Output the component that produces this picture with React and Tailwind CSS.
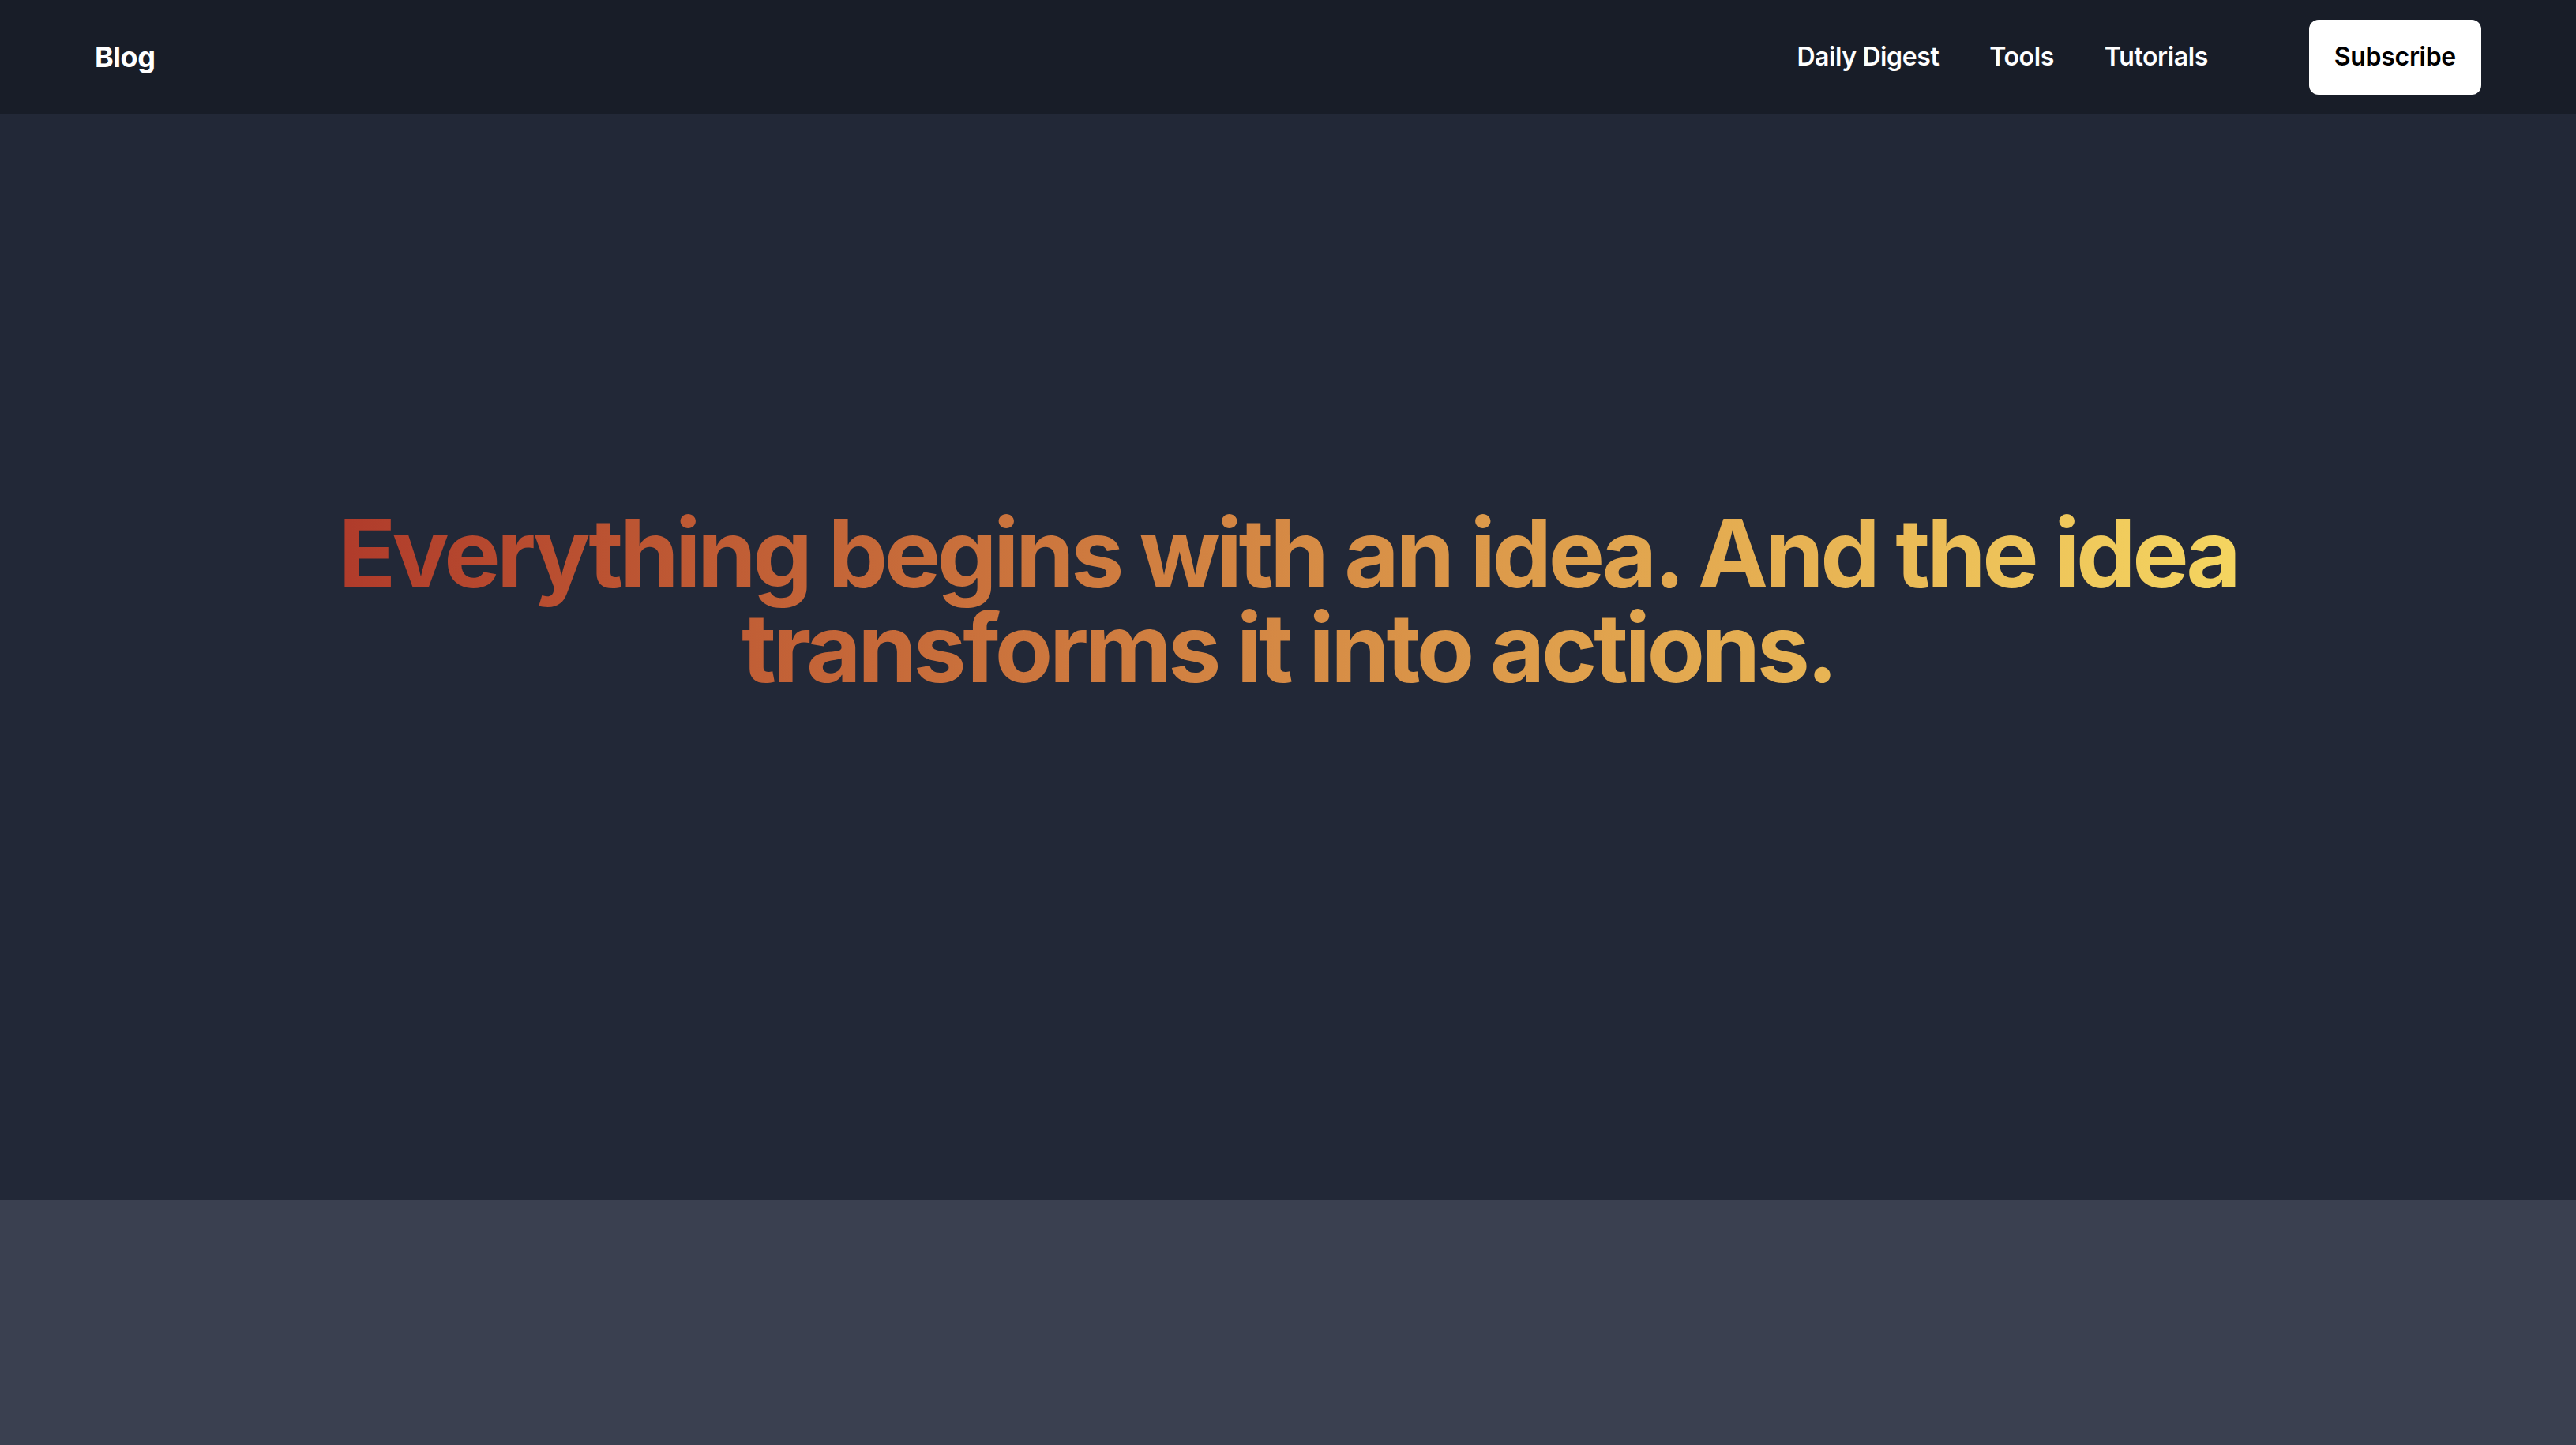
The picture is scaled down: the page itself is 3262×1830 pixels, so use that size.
export default function App() {
  return (
    <div className="min-h-screen bg-[#3a4050] font-['Inter',sans-serif]">
      <nav className="flex h-[144px] items-center justify-between bg-[#181d28] px-[120px]">
        <a href="#" className="text-[36px] font-bold tracking-[-0.5px] text-white">
          Blog
        </a>
        <div className="flex items-center">
          <ul className="flex items-center gap-[64px] text-[32px] font-semibold tracking-[-0.4px] text-white">
            <li>Daily Digest</li>
            <li>Tools</li>
            <li>Tutorials</li>
          </ul>
          <button className="ml-[128px] h-[95px] rounded-[12px] bg-white px-[32px] text-[32px] font-semibold tracking-[-0.3px] text-black">
            Subscribe
          </button>
        </div>
      </nav>

      <section className="flex h-[1376px] justify-center bg-[#222837] pt-[497px]">
        <h1 className="max-w-[2560px] text-center">
          <span className="inline-block bg-gradient-to-r from-[#ad3529] to-[#f6da62] bg-clip-text text-[120px] leading-[120px] font-bold tracking-[-4.5px] text-transparent">
            Everything begins with an idea. And the idea transforms it into
            actions.
          </span>
        </h1>
      </section>

      <section className="h-[310px] bg-[#3a4050]" />
    </div>
  );
}
